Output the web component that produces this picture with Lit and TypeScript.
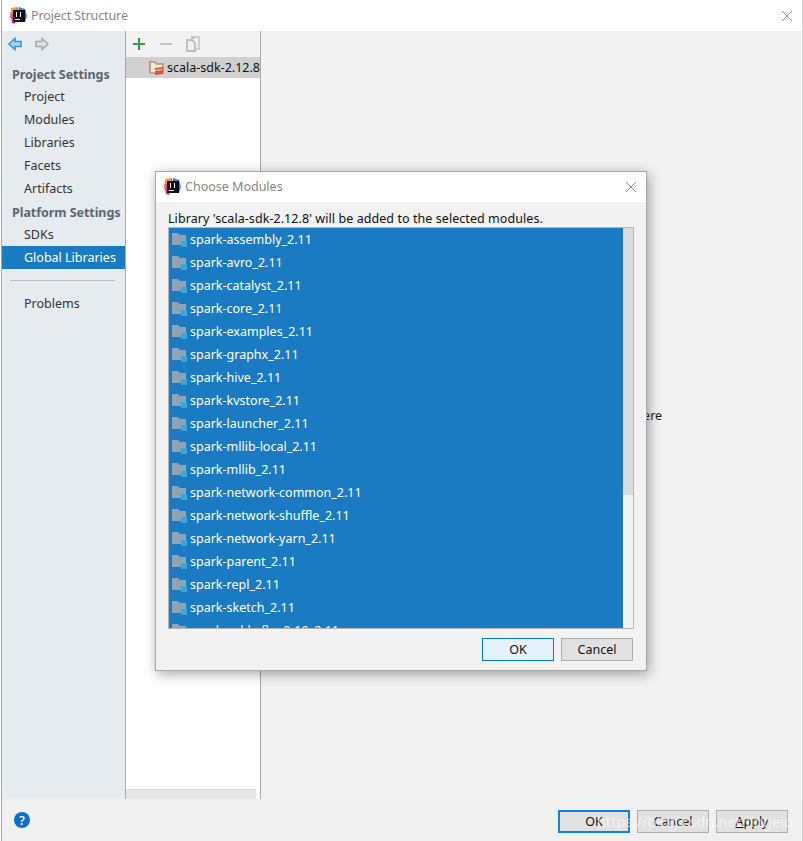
import { LitElement, html, css } from "lit";
import { customElement } from "lit/decorators.js";

const logo = html`<svg class="logo" viewBox="0 0 17 17" width="17" height="17">
  <path d="M1 3 L8 0 L9 8 L3 14 L0 10Z" fill="#fc4f72"/>
  <path d="M1 1 L7 0 L6 5 L1 6Z" fill="#f99b3f"/>
  <path d="M1 10 L6 13 L5 17 L2 16Z" fill="#d92bb0"/>
  <path d="M9 0 L15 2 L17 9 L15 15 L8 14Z" fill="#2f7df2"/>
  <rect x="3" y="3" width="12" height="12" fill="#111"/>
  <rect x="5" y="12" width="5" height="1" fill="#eee"/>
  <rect x="6" y="5" width="1" height="5" fill="#eee"/>
  <rect x="10" y="5" width="1" height="5" fill="#eee"/>
</svg>`;

const closeX = html`<svg class="x" viewBox="0 0 12 12" width="12" height="12"><path d="M1 1 L11 11 M11 1 L1 11" stroke="#8c8c8c" stroke-width="1" fill="none"/></svg>`;

const moduleIcon = html`<svg class="mod" viewBox="0 0 16 15" width="16" height="15">
  <path d="M0 0 H6 L8 2 H14 V12 H0Z" fill="#8ea3b6"/>
  <rect x="9" y="8" width="6" height="6" fill="#37a8dc"/>
</svg>`;

const modules = [
  "spark-assembly_2.11", "spark-avro_2.11", "spark-catalyst_2.11", "spark-core_2.11",
  "spark-examples_2.11", "spark-graphx_2.11", "spark-hive_2.11", "spark-kvstore_2.11",
  "spark-launcher_2.11", "spark-mllib-local_2.11", "spark-mllib_2.11", "spark-network-common_2.11",
  "spark-network-shuffle_2.11", "spark-network-yarn_2.11", "spark-parent_2.11", "spark-repl_2.11",
  "spark-sketch_2.11", "spark-sql-kafka-0-10_2.11",
];

@customElement("app-root")
export class AppRoot extends LitElement {
  static styles = css`
    :host { display: block; width: 803px; height: 841px; position: relative; overflow: hidden; background: #fff;
      font-family: "Noto Sans", "Open Sans", sans-serif; font-size: 12.5px; color: #1c1c1c; }
    .win { height: 841px; display: flex; flex-direction: column; border-left: 1px solid #a9a9a9; margin-left: 1px; border-right: 1px solid #d4d4d4; box-sizing: border-box; }
    .title { height: 31px; flex: none; display: flex; align-items: center; background: #fff; padding-left: 8px; color: #858585; gap: 4px; position: relative; letter-spacing: -.1px; }
    .logo { flex: none; }
    .title-x { position: absolute; right: 9px; top: 9px; }
    .main { flex: 1; display: flex; min-height: 0; }
    .side { width: 123px; flex: none; background: #e6ebf0; border-right: 1px solid #a8a8a8; }
    .nav { height: 26px; display: flex; align-items: center; gap: 13px; padding-left: 6px; }
    .head { height: 23px; box-sizing: border-box; padding-top: 2px; display: flex; align-items: center; padding-left: 10px; font-weight: 700; color: #5c6670; letter-spacing: -.05px; }
    .head.first { margin-top: 5px; }
    .it { height: 23px; display: flex; align-items: center; padding-left: 22px; color: #333; }
    .it.sel { background: #1a7ac2; color: #fff; }
    .sep { height: 1px; background: #bdbdbd; margin: 11px 10px 11px 8px; }
    .mid { width: 134px; flex: none; background: #fff; border-right: 1px solid #a8a8a8; display: flex; flex-direction: column; }
    .tools { height: 26px; flex: none; background: #f2f2f2; display: flex; align-items: center; padding-left: 7px; gap: 14px; }
    .minus { margin-left: 1px; }
    .lib { height: 21px; background: #d0d0d0; display: flex; align-items: center; padding-left: 23px; gap: 3px; white-space: nowrap; overflow: hidden; color: #111; flex: none; }
    .folder { flex: none; }
    .grow { flex: 1; }
    .hs { height: 10px; width: 130px; background: #e6e6e6; border-top: 1px solid #dedede; box-sizing: border-box; flex: none; }
    .right { flex: 1; background: #f2f2f2; display: flex; align-items: center; justify-content: center; }
    .hint { color: #1c1c1c; white-space: nowrap; }
    .foot { height: 42px; flex: none; background: #f0f0f0; display: flex; align-items: center; padding: 0 14px 0 10px; gap: 7px; }
    .help { width: 16px; height: 16px; border-radius: 50%; background: #0d6fc9; color: #fff; font-size: 12px; display: flex; align-items: center; justify-content: center; font-weight: 600; margin-left: 2px; margin-right: auto; }
    .btn { width: 72px; height: 23px; box-sizing: border-box; border: 1px solid #adadad; background: #e1e1e1; display: flex; align-items: center; justify-content: center; color: #111; }
    .btn.def { border: 2px solid #0a84e0; }
    .foot .btn { margin-top: 2px; }
    .btn.lite { border: 1px solid #0078d7; background: #e5f1fb; }
    u { text-underline-offset: 1px; }
    .dlg { position: absolute; left: 155px; top: 171px; width: 492px; height: 500px; box-sizing: border-box; background: #f2f2f2; border: 1px solid #a6a6a6;
      box-shadow: 2px 3px 12px rgba(0,0,0,.35); display: flex; flex-direction: column; }
    .dtitle { height: 30px; flex: none; box-sizing: border-box; padding: 0 0 2px 8px; background: #fff; display: flex; align-items: center; gap: 4px; color: #858585; position: relative; }
    .dtitle .x { position: absolute; right: 9px; top: 9px; }
    .dlabel { height: 25px; flex: none; display: flex; align-items: flex-end; padding-left: 12px; box-sizing: border-box; color: #111; letter-spacing: .065px; }
    .list { height: 402px; margin: 0 12px; flex: none; box-sizing: border-box; border: 1px solid #b5b5b5; display: flex; overflow: hidden; }
    .rows { flex: 1; background: #1a7ac2; overflow: hidden; }
    .row { height: 23px; flex: none; display: flex; align-items: center; padding-left: 3px; gap: 2px; color: #fff; white-space: nowrap; }
    .mod { flex: none; margin-top: 2px; }
    .sb { width: 10px; flex: none; background: #f2f2f2; }
    .thumb { height: 267px; background: #dcdcdc; }
    .dfoot { flex: 1; display: flex; justify-content: flex-end; padding: 9px 13px 0 0; gap: 7px; }
    .mark { position: absolute; right: 10px; top: 811px; color: rgba(255,255,255,.6); font-size: 14.7px; pointer-events: none; white-space: nowrap; }
  `;

  render() {
    return html`
      <div class="win">
        <div class="title">${logo}<span>Project Structure</span><span class="title-x">${closeX}</span></div>
        <div class="main">
          <div class="side">
            <div class="nav">
              <svg width="14" height="14" viewBox="0 0 14 14"><path d="M1 7 L7 1.5 V4.5 H13 V9.5 H7 V12.5Z" fill="#a9d3ec" stroke="#3f97d0" stroke-width="1.6"/></svg>
              <svg width="14" height="14" viewBox="0 0 14 14"><path d="M13 7 L7 1.5 V4.5 H1 V9.5 H7 V12.5Z" fill="#dfe3e6" stroke="#a6abaf" stroke-width="1.6"/></svg>
            </div>
            <div class="head first">Project Settings</div>
            <div class="it">Project</div>
            <div class="it">Modules</div>
            <div class="it">Libraries</div>
            <div class="it">Facets</div>
            <div class="it">Artifacts</div>
            <div class="head">Platform Settings</div>
            <div class="it">SDKs</div>
            <div class="it sel">Global Libraries</div>
            <div class="sep"></div>
            <div class="it">Problems</div>
          </div>
          <div class="mid">
            <div class="tools">
              <svg width="12" height="12" viewBox="0 0 12 12"><path d="M0 6 H12 M6 0 V12" stroke="#2f9e44" stroke-width="2"/></svg>
              <svg class="minus" width="12" height="12" viewBox="0 0 12 12"><path d="M0 6 H12" stroke="#c6c6c6" stroke-width="2"/></svg>
              <svg width="15" height="16" viewBox="0 0 15 16"><path d="M5 1 H13 V13 H10" fill="none" stroke="#c4c4c4" stroke-width="1.6"/><path d="M1 4 H6 L9 7 V15 H1Z" fill="none" stroke="#bcbcbc" stroke-width="1.8"/><rect x="5" y="0" width="4" height="3" fill="#c4c4c4"/></svg>
            </div>
            <div class="lib">
              <svg class="folder" width="15" height="14" viewBox="0 0 15 14"><path d="M1 1 H6 L7.5 3 H14 V12 H1Z" fill="#f0e6d4" stroke="#b4966a" stroke-width="1.6"/><path d="M6 7 L14 6 V8 L6 9Z M6 10 L14 9 V13 L6 14Z" fill="#e0503f"/></svg>
              <span>scala-sdk-2.12.8</span>
            </div>
            <div class="grow"></div>
            <div class="hs"></div>
          </div>
          <div class="right"><span class="hint">Select a library to view or edit its details here</span></div>
        </div>
        <div class="foot">
          <div class="help">?</div>
          <div class="btn def">OK</div>
          <div class="btn">Cancel</div>
          <div class="btn"><span><u>A</u>pply</span></div>
        </div>
      </div>
      <div class="dlg">
        <div class="dtitle">${logo}<span>Choose Modules</span>${closeX}</div>
        <div class="dlabel">Library 'scala-sdk-2.12.8' will be added to the selected modules.</div>
        <div class="list">
          <div class="rows">
            ${modules.map((m) => html`<div class="row">${moduleIcon}<span>${m}</span></div>`)}
          </div>
          <div class="sb"><div class="thumb"></div></div>
        </div>
        <div class="dfoot">
          <div class="btn lite">OK</div>
          <div class="btn">Cancel</div>
        </div>
      </div>
      <div class="mark">https://blog.csdn.net/lingeio</div>
    `;
  }
}
